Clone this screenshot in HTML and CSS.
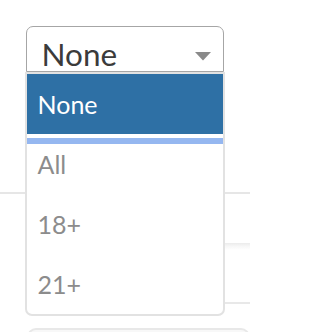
FILE: index.html
```html
<!DOCTYPE html>
<html>
<head>
<meta charset="utf-8">
<link rel="stylesheet" href="styles.css">
</head>
<body>
<div class="page">
  <div class="select">
    <span class="select-value">None</span>
    <svg class="select-arrow" width="16" height="9" viewBox="0 0 16 9"><polygon points="0,0 16,0 8,8.5" fill="#8a8a8a"/></svg>
  </div>
  <div class="rows">
    <div class="row row-first"></div>
    <div class="row row-second"></div>
    <div class="row row-card"></div>
    <div class="row row-box"></div>
  </div>
  <ul class="menu">
    <li class="opt opt-selected">None</li>
    <li class="opt opt-focus">All</li>
    <li class="opt">18+</li>
    <li class="opt">21+</li>
  </ul>
</div>
</body>
</html>
```
FILE: styles.css
```css
html, body {
  margin: 0;
  padding: 0;
  background: #ffffff;
}
.page {
  position: relative;
  width: 250px;
  height: 332px;
  overflow: hidden;
  padding-top: 26px;
  box-sizing: border-box;
  font-family: Lato, "Liberation Sans", sans-serif;
}
.select {
  margin-left: 25.5px;
  width: 198.5px;
  height: 46px;
  box-sizing: border-box;
  border: 1.5px solid #a6a6a6;
  border-radius: 7px 7px 0 0;
  padding: 9px 12px 0 15px;
  display: flex;
  align-items: flex-start;
  justify-content: space-between;
  background: #ffffff;
}
.select-value {
  font-size: 31.5px;
  line-height: 36px;
  color: #3b3b3b;
}
.select-arrow {
  margin-top: 16px;
}
.rows {
  display: flex;
  flex-direction: column;
}
.row-first {
  height: 120px;
  border-bottom: 2px solid #e6e6e6;
}
.row-second {
  height: 49px;
  margin-left: 40px;
}
.row-card {
  height: 59px;
  margin-left: 40px;
  background: linear-gradient(to bottom, #ebebeb 0, #f6f6f6 3px, #ffffff 7px);
  border-bottom: 2px solid #e8e8e8;
}
.row-box {
  margin-top: 24px;
  margin-left: 27px;
  height: 40px;
  border: 2px solid #e8e8e8;
  border-radius: 9px;
  background: #f8f8f8;
}
.menu {
  position: absolute;
  left: 25px;
  top: 72px;
  width: 200px;
  box-sizing: border-box;
  margin: 0;
  padding: 0;
  list-style: none;
  background: #ffffff;
  border: 2px solid #e2e2e2;
  border-radius: 0 0 7px 7px;
}
.opt {
  height: 60px;
  line-height: 60px;
  padding-left: 10.5px;
  font-size: 25px;
  color: #8c8c8c;
}
.opt-selected {
  background: #2e70a5;
  color: #ffffff;
}
.opt-focus {
  background: linear-gradient(to bottom, transparent 4px, #95b7f0 4px, #95b7f0 10px, transparent 10px);
}
```
